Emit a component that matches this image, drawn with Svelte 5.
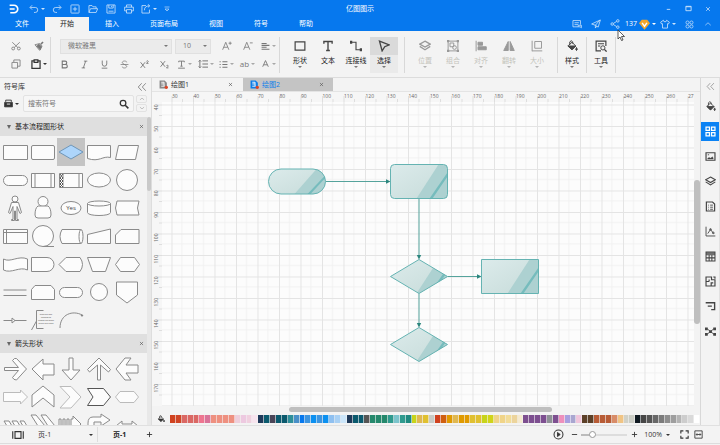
<script>
	// Icon markup, drawn on a 16x16 grid with currentColor strokes
	const icons = {
		logo: '<path d="M1 2h7a6 6 0 0 1 0 12H2M1 8h8" stroke-width="2.6"/>',
		undo: '<path d="M5 2 1.5 5.5 5 9M2 5.5h8a4 4 0 0 1 0 8H8"/>',
		redo: '<path d="m11 2 3.500 3.500L11 9M14 5.500H6a4 4 0 0 0 0 8h2"/>',
		add: '<rect x="1.500" y="1.500" width="13" height="13" rx="1"/><path d="M8 4.500v7M4.500 8h7"/>',
		folder: '<path d="M1.500 13.500v-11h5l1.500 2h5v3M1.500 13.500 4 7.500h11.500l-2.500 6z"/>',
		save: '<path d="M1.500 1.500h13v13h-13zM4.500 1.500v5h7v-5M9 3v2M4 11.500h8"/>',
		print: '<path d="M4 5V1.500h8V5M4 11H1V5h14v6h-3M4 9h8v5.500H4z"/>',
		exportTo: '<path d="M8 2.500H1.500v12h12V9M5.500 10c0-5 3-7 8-7M11 .5 14 3l-3 2.500"/>',
		more: '<path d="M3 4h10"/><path d="M4 8h8l-4 4z"/>',
		minimize: '<path d="M4 10h8" stroke-width="2"/>',
		maximize: '<path d="M2 3h12v10H2zM2 4h12" stroke-width="2"/>',
		close: '<path d="m3 3 10 10M13 3 3 13" stroke-width="2"/>',
		comment: '<path d="M13.500 9V2.500h-12v10H10M4 6h7M4 9h6M10 10h5v4l-2-1.500h-3z"/>',
		send: '<path d="M1 8 15 1.500 11.500 13 7 10zM7 10v4.500l2-3M7 10l7-8"/>',
		share: '<circle cx="3.500" cy="8" r="2"/><circle cx="12.500" cy="3" r="2"/><circle cx="12.500" cy="13" r="2"/><path d="m5.500 7 5-3M5.500 9l5 3"/>',
		gem: '<path d="M4 1h8l4 5-8 9.500L0 6z" fill="#f3a62c" stroke="none"/><path d="m4.500 5.500 3.500 5 3.500-5" stroke="#fff" stroke-width="2"/>',
		shirt: '<path d="M5.500 2 1 5l1.500 3L4 7.500v7h8v-7l1.500.5L15 5l-4.500-3a2.500 2.500 0 0 1-5 0z"/>',
		apps: '<circle cx="4.500" cy="4.500" r="2.800"/><circle cx="11.500" cy="4.500" r="2.800"/><circle cx="4.500" cy="11.500" r="2.800"/><circle cx="11.500" cy="11.500" r="2.800"/>',
		up: '<path d="m2.500 10.500 5.500-5 5.500 5"/>',
		down: '<path d="m2.500 5.500 5.500 5 5.500-5"/>',
		collapse: '<path d="M7.500 2 2 8l5.500 6M14 2 8.500 8l5.500 6"/>',
		cut: '<circle cx="3.500" cy="12" r="2.300"/><circle cx="12.500" cy="12" r="2.300"/><path d="M5 10.500 14 2M11 10.500 2 2"/>',
		brush: '<path d="M1.500 6 9 4l4 4-4 7z"/><path d="m4 8 6 6 2-5-4-4z" fill="currentColor"/><path d="m11 5 3.500-3.500" stroke-width="2.400"/>',
		copy: '<path d="M1.500 5.500h9v9h-9zM4.500 5V1.500h10v10h-4"/>',
		paste: '<path d="M4.500 3h-3v12h13V3h-3M5 1.500h6v4H5z" stroke-width="2"/>',
		bold: '<path d="M4 2h5a3 3 0 0 1 0 6H4zM4 8h6a3 3 0 0 1 0 6H4z" stroke-width="2"/>',
		italic: '<path d="M7 2h6M3 14h6M10 2 6 14" stroke-width="1.600"/>',
		underline: '<path d="M4 1v6a4 4 0 0 0 8 0V1M3 14.500h10" stroke-width="1.600"/>',
		strike: '<path d="M12 4c0-3-8-3-8 .5S12 8 12 11.500 4 15 4 12M1 8h14"/>',
		sup: '<path d="m1 4 8 10M9 4 1 14M11.500 2.500c1-2 3.500-1 3 .5l-3 3H15" stroke-width="1.600"/>',
		sub: '<path d="m1 2 8 10M9 2 1 12M11.500 10.500c1-2 3.500-1 3 .5l-3 3H15" stroke-width="1.600"/>',
		textFx: '<path d="M3 4V2h10v2M8 2v9M6 11h4M2 14.500h12" stroke-width="1.600"/>',
		spacing: '<path d="M3 2v12M1 4l2-2 2 2M1 12l2 2 2-2M7 3h9M7 8h9M7 13h9" stroke-width="1.600"/>',
		bullets: '<path d="M1 3h2M6 3h9M1 8h2M6 8h9M1 13h2M6 13h9" stroke-width="1.800"/>',
		fontColor: '<path d="M3 12 8 1l5 11M5 8.500h6" stroke-width="1.600"/>',
		grow: '<path d="M1 14 6 2l5 12M3 10h6M13 1v5M10.500 3.500h5"/>',
		shrink: '<path d="M1 14 6 2l5 12M3 10h6M11 3h4.500"/>',
		align: '<path d="M1 2.500h9M1 6h14M1 9.500h9M1 13h14" stroke-width="1.800"/>',
		shape: '<path d="M1.500 2.500h13v11h-13z" stroke-width="1.600"/>',
		text: '<path d="M2.500 5V2h11v3M8 2v12M5.500 14h5" stroke-width="1.800"/>',
		connector: '<path d="M1 3h7v10h6" stroke-width="1.500"/><path d="M0 1h3v4H0zM13 11h3v4h-3z" fill="currentColor" stroke="none"/>',
		pointer: '<path d="m2 1.500 13 5-6 2.500-3.500 5.500z" stroke-width="1.800"/>',
		layers: '<path d="m8 1.500 7 4-7 4-7-4zM1 8.500l7 4.500 7-4.500" stroke-width="1.600"/>',
		group: '<path d="M1.500 1.500h13v13h-13zM4 4h5v5H4z"/><circle cx="10" cy="10" r="2.500"/><path d="M0 0h3v3H0zM13 0h3v3h-3zM0 13h3v3H0zM13 13h3v3h-3z" fill="currentColor" stroke="none"/>',
		alignLeft: '<path d="M1.500 1v14"/><path d="M4 3h6v4H4zM4 9h11v4H4z" fill="currentColor"/>',
		flip: '<path d="M7 2v12H1z" fill="currentColor"/><path d="M9.500 2v12h5.500z" fill="currentColor"/>',
		sizing: '<path d="M1.500 1v14M1.500 14.500H15M5 2h9v9H5z"/>',
		bucket: '<path d="M3 7.500 8 3l5 5-5 5zM5 6.500V2.500q2-3 4 0V5"/><path d="M2.500 8h10.500L8 13z" fill="currentColor"/><path d="M14 10q2 3 0 4-2-1 0-4" fill="currentColor"/>',
		tools: '<path d="M14.500 8V1.500h-13v13H8M4 5h8M4 8h3" stroke-width="1.600"/><circle cx="10.500" cy="10.500" r="2.800"/><path d="m12.500 12.500 3 3" stroke-width="1.800"/>',
		grid: '<path d="M1.500 1.500h5v5h-5zM9.500 1.500h5v5h-5zM1.500 9.500h5v5h-5zM9.500 9.500h5v5h-5z" stroke-width="1.800"/>',
		image: '<path d="M1.500 2.500h13v11h-13z" stroke-width="1.700"/><path d="M4 11.500v-1l2-1 2 1 3-2 1 3z" fill="currentColor" stroke-width=".6"/><path d="M4 5.500h2"/>',
		doc: '<path d="M2 1.500h9l3 3v10H2z" stroke-width="1.700"/><path d="M4.500 6h1M7.500 6h4M4.500 9h1M7.500 9h4M4.500 12h1M7.500 12h4"/>',
		chart: '<path d="M1.500 1v13.500H15M4 11l4-6 3 4 2 2"/><circle cx="8" cy="5" r="1.200"/><circle cx="12" cy="10" r="1.200"/>',
		table: '<path d="M1.500 1.500h13v13h-13zM1.500 5.500h13M1.500 10h13M6 6v8M10 6v8" stroke-width="1.500"/><path d="M1.500 2h13v2h-13z" fill="currentColor" stroke="none"/>',
		plan: '<path d="M1.500 1.500h8v4h5v9h-13zM1.500 8H6M6 5v3M9 14v-4h3M12 1.500h2.500V4" stroke-width="1.700"/>',
		gantt: '<path d="M1 2.500h14M14 3v10M4 7.500h6M9 12.500h6" stroke-width="2"/>',
		network: '<path d="m3 4 10 8M13 4 3 12"/><path d="M0 2h4v4H0zM12 2h4v4h-4zM0 10h4v4H0zM12 10h4v4h-4zM6 6h4v4H6z" fill="currentColor" stroke="none"/>',
		search: '<circle cx="6.500" cy="6.500" r="4.500" stroke-width="2"/><path d="m10 10 5 5" stroke-width="2.500"/>',
		library: '<path d="M3 5V2h10v3" stroke-width="1.600"/><path d="M1 6h14v8H1z" fill="currentColor"/><path d="M5 9h6" stroke="#f3f3f3" stroke-width="1.600"/>',
		file: '<path d="M1 1h9l4 4v10H1z" fill="currentColor" stroke="none"/><path d="M4 4h5v3H4M4 11h6M9 7v4" stroke="#fff" stroke-width="1.600"/><circle cx="13" cy="13" r="3" fill="#dc4525" stroke="none"/>',
		pages: '<path d="M1 3v10M15 3v10M4 3.500h8v9H4z" stroke-width="1.500"/>',
		plus: '<path d="M8 2v12M2 8h12" stroke-width="2"/>',
		minus: '<path d="M2 8h12" stroke-width="2"/>',
		play: '<circle cx="8" cy="8" r="6.500" stroke-width="1.500"/><path d="m6.500 5 4 3-4 3z" fill="currentColor"/>',
		fullscreen: '<path d="M6 1.500H1.500V6M10 1.500h4.500V6M6 14.500H1.500V10M10 14.500h4.500V10" stroke-width="2"/>',
		fit: '<path d="M1.500 1.500h13v13h-13zM4 8h8M5.500 6 4 8l1.500 2M10.500 6 12 8l-1.500 2" stroke-width="1.500"/>',
	};

	const quick = [['undo', '撤销', true], ['redo', '重做'], ['add', '新建'], ['folder', '打开'], ['save', '保存'], ['print', '打印'], ['exportTo', '导出', true]];
	const menus = ['文件', '开始', '插入', '页面布局', '视图', '符号', '帮助'];

	const formats = [['bold', '加粗'], ['italic', '斜体'], ['underline', '下划线'], ['strike', '删除线'], ['sup', '上标'], ['sub', '下标']];
	const drawTools = [['shape', '形状', true], ['text', '文本'], ['connector', '连接线', true], ['pointer', '选择', true]];
	const arrange = [['layers', '位置'], ['group', '组合'], ['alignLeft', '对齐'], ['flip', '翻转'], ['sizing', '大小']];
	const side = [['bucket', '样式'], ['grid', '符号库'], ['image', '图片'], ['layers', '图层'], ['doc', '页面'], ['chart', '图表'], ['table', '表格'], ['plan', '平面图'], ['gantt', '甘特图'], ['network', '网络']];

	// Stencil shapes, 28x28 each
	const basicShapes = [
		'<path d="M2.500 7.500h24v14h-24z"/>',
		'<rect x="2.500" y="7.500" width="23" height="14" rx="1.500"/>',
		'<path d="m14 7 12 7-12 7-12-7z" fill="#add5fb" stroke="#6f96b8"/>',
		'<path d="M2.500 7.500h23v12c-8-2-11 5-23 1z"/>',
		'<path d="M5.500 7.500h20l-3 14h-20z"/>',
		'<rect x="2.500" y="9.500" width="24" height="10" rx="5"/>',
		'<path d="M2.500 7.500h23v14h-23zM6 7.500v14M22 7.500v14"/>',
		'<path d="M2.500 7.500h23v14h-23zM6 7.500v14M22 7.500v14"/><path d="m3 8 3 4-3 3 3 3-3 3M6 8l-3 4 3 3-3 3 3 3" stroke="#555"/>',
		'<ellipse cx="14" cy="14" rx="11.500" ry="7"/>',
		'<circle cx="14" cy="14" r="10.500"/>',
		'<circle cx="14" cy="5" r="3"/><path d="M10.500 8.500h7l3 10-1.500 1-3-7v13h1.500v1h-3V17h-1v9.500h-3v-1H12v-13l-3 7-1.500-1z"/>',
		'<circle cx="14" cy="7.500" r="5"/><path d="M9 12h10q3 2 3 9 0 3-3 3H9q-3 0-3-3 0-7 3-9z"/>',
		'<ellipse cx="14" cy="14" rx="10" ry="6.500"/>',
		'<path d="M2.500 9.500v9c0 4 23 4 23 0v-9"/><ellipse cx="14" cy="9.500" rx="11.500" ry="2.500"/>',
		'<path d="M4 7h22q-3 7 0 14H4q-3-7 0-14z"/>',
		'<path d="M2.500 7.500h24v14h-24zM5.500 7.500v14M2.500 10.500h24"/>',
		'<circle cx="14" cy="14" r="10.500"/><path d="M14 24.500h11"/>',
		'<path d="M5 7.500h19q2.500 7 0 14H5q-4-7 0-14z"/><ellipse cx="24" cy="14.500" rx="2" ry="7"/>',
		'<path d="M2.500 12.500 25.500 7v14.500h-23z"/>',
		'<path d="M8 7.500h18v14H2.500V13z"/>',
		'<path d="M2.500 9c7 4 15-4 24 0v11c-8-4-16 4-24 0z"/>',
		'<path d="M2.500 7.500H18a7 7 0 0 1 0 14H2.500z"/>',
		'<path d="M9 7.500h14q5 7 0 14H9l-7-7z"/>',
		'<path d="M2.500 7.500h23l-5 14h-13z"/>',
		'<path d="M7.500 7.500h14l5 7-5 7h-14l-5-7z"/>',
		'<path d="M2.500 12h23M2.500 17.500h23"/>',
		'<path d="M6 7.500h16l3.500 4v10h-23v-10z"/>',
		'<rect x="2.500" y="9.500" width="23" height="10" rx="5"/>',
		'<circle cx="14" cy="14" r="8.500"/>',
		'<path d="M3.500 4h21v13L14 25 3.500 17z"/>',
		'<path d="M2.500 14.500h23"/><path d="m11 12 3 2.500-3 2.500z"/>',
		'<path d="M14.500 4.500h-7v18h7M2.500 24l5-9" fill="none"/>',
		'<path d="M3 22C3 8 16 4 25 9" fill="none"/><circle cx="25" cy="9.500" r=".7" fill="#333"/>',
	];
	const arrowShapes = [
		'<path d="M3.500 12.500h14l-6-7q2-3 4-2l10 10.500-10 11q-3 0-4-2.500l6-7h-14z"/>',
		'<path d="M3 14 14 4v5h11v11H14v5z"/>',
		'<path d="M12 3h4v12h7l-9 10-9-10h7z"/>',
		'<path d="M12.500 25V10l-8 7-2-2.500L14 3l11.500 11.500-2 2.500-8-7v15z"/>',
		'<path d="M3 14 12 3h6l-5 7h12v8H13l5 7h-6z"/>',
		'<path d="M2.500 9.500h17V7l7 7-7 7v-2.500h-17z" stroke="#bbb"/>',
		'<path d="M3 12 14 3l11 9v12l-11-9-11 9z"/>',
		'<path d="M3 3.500h11l10 10.500-10 11H3l10-11z" stroke="#bbb"/>',
		'<path d="M2.500 5.500h16l7 8.500-7 8.500h-16L8 14z" stroke="#555"/>',
		'<path d="M7 8.500h14l4.500 5.500-4.500 5.500H7L2.500 14z" stroke="#bbb"/>',
		'<path d="M3 10h5l3 5v8H3l3-8zM11 10h5l3 5v8h-5v-8zM19 10h4l3 5v8h-4v-8z"/>',
		'<path d="M2 4h5l9 11-8 10H2l7-10zM12 4h5l9 11-8 10h-5l6-10z"/>',
		'<path d="M2 8h2v9H2zM6 8h2v9H6zM10 8h2v9h-2zM14 8h2V5l8 8-8 8v-4h-2z"/>',
		'<path d="M3 12q0-6 5-6h8V3l9 6-9 6v-4H9v10H3z"/>',
		'<path d="m3 15 6-5v3h10v-3l6 5-6 5v-3H9v3z"/>',
	];

	const swatches = (
		'd0421f cf4526 da6864 da6864 da6864 ee7590 d97399 ee9080 ee9080 ee9080 ee9080 eecfdc edc9e0 f0d0df f7e4ee ' +
		'1f3a5a 0b5a6e 4a4558 0b5a6e 0b5a6e 2e8f9a 4a90c8 0678ee 3d95e0 0c90f0 3d95e0 0c90f0 8fc0f0 a8d0f4 cce6fa ' +
		'1f3a5a 0b5a6e 0b5a6e 555555 24886c 24886c 24886c 2f9a8e 7cc4cc 2f9a8e 1f8a80 c8d41a e0b850 e0c030 c9cbc6 ' +
		'd0421f d06010 e09a00 e0b850 e09a00 e09a00 e0c030 e0c030 c8d41a d0d41a f0d488 f0d488 f2dc98 ecd49c f5ead0 ' +
		'7d4f90 7d4f90 7d4f90 7d4f90 8e9196 7d4f90 ee90bc a8a0e0 a9a6d0 f0c6dc 5c4028 5c4028 b85c36 b85c36 b85c36 ' +
		'd88c68 f0c484 d0d1c8 cccec6 101a22 464646 555555 686868 7b7b7b 8e8e8e 9e9e9e b4b4b4 cdcdcd dadada ffffff'
	).split(' ');

	const cols = Array.from({ length: 25 }, (_, i) => ({ label: i < 24 ? 30 + i * 10 : 27, at: 19.5 + i * 21.5 }));
	const rows = Array.from({ length: 14 }, (_, i) => ({ label: 40 + i * 10, at: 12.5 + i * 21.5 }));

	const nodes = [
		{ x: 116.5, y: 77, h: 25, d: 'M12.5 0h32a12.500 12.500 0 0 1 0 25h-32a12.500 12.500 0 0 1 0-25z' },
		{ x: 238.5, y: 72.5, h: 34, d: 'M4 0h49a4 4 0 0 1 4 4v26a4 4 0 0 1-4 4H4a4 4 0 0 1-4-4V4a4 4 0 0 1 4-4z' },
		{ x: 238.5, y: 167.5, h: 34, d: 'M28.500 0 57 17 28.500 34 0 17z' },
		{ x: 329.5, y: 167.5, h: 34, d: 'M0 0h57v34H0z' },
		{ x: 238.5, y: 235.5, h: 34, d: 'M28.500 0 57 17 28.500 34 0 17z' },
	];
	const links = ['M173.500 89.500H236', 'M267 106.500V165', 'M295.500 184.500H327', 'M267 201.500V233'];

	let menu = $state('开始');
	let tool = $state('选择');
	let panel = $state('符号库');
	let doc = $state('绘图2');
	let picked = $state(2);
	let query = $state('');
	let zoom = $state(100);
</script>

{#snippet icon(name, size = 10)}
	<svg class="icon" width={size} height={size} viewBox="0 0 16 16" aria-hidden="true">{@html icons[name]}</svg>
{/snippet}

{#snippet iconBtn(name, label, caret = false, size = 10)}
	<button class="icon-btn" class:has-caret={caret} aria-label={label}>
		{@render icon(name, size)}
		{#if caret}<span class="caret"></span>{/if}
	</button>
{/snippet}

{#snippet bigBtn(name, label, caret, disabled)}
	<button class="big" class:active={tool === label} {disabled} onclick={() => (tool = label)}>
		<span class="big-icon">{@render icon(name, 12)}</span>
		<span class="big-label">{label}</span>
		{#if caret}<span class="caret"></span>{/if}
	</button>
{/snippet}

<div class="app">
	<header>
		<div class="titlebar">
			<div class="quick">
				<span class="logo">{@render icon('logo')}</span>
				{#each quick as [name, label, caret]}
					{@render iconBtn(name, label, caret)}
				{/each}
				<button class="icon-btn narrow" aria-label="更多">{@render icon('more', 8)}</button>
			</div>
			<h1>亿图图示</h1>
			<div class="window-btns">
				{@render iconBtn('minimize', '最小化', false, 7)}
				{@render iconBtn('maximize', '最大化', false, 7)}
				{@render iconBtn('close', '关闭', false, 6)}
			</div>
		</div>
		<div class="menubar">
			<nav>
				{#each menus as m}
					<button class="menu" class:active={menu === m} onclick={() => (menu = m)}>{m}</button>
				{/each}
			</nav>
			<div class="account">
				{@render iconBtn('comment', '评论')}
				{@render iconBtn('send', '发送')}
				{@render iconBtn('share', '分享')}
				<button class="points">137 {@render icon('gem', 11)}<span class="caret"></span></button>
				{@render iconBtn('shirt', '主题', true)}
				{@render iconBtn('apps', '应用', false, 9)}
				{@render iconBtn('up', '收起功能区', false, 8)}
			</div>
		</div>
	</header>

	<div class="ribbon">
		<div class="group clipboard">
			{@render iconBtn('cut', '剪切')}
			{@render iconBtn('brush', '格式刷')}
			{@render iconBtn('copy', '复制')}
			<button class="icon-btn has-caret dark" aria-label="粘贴">{@render icon('paste')}<span class="caret"></span></button>
		</div>
		<div class="group font">
			<div class="row">
				<span class="select family">
					<select aria-label="字体"><option>微软雅黑</option><option>宋体</option></select>
					<span class="caret"></span>
				</span>
				<span class="select size">
					<select aria-label="字号"><option>10</option><option>12</option></select>
					<span class="caret"></span>
				</span>
				<span class="wide">
					{@render iconBtn('grow', '增大字号')}
					{@render iconBtn('shrink', '减小字号')}
					{@render iconBtn('align', '对齐方式', true, 9)}
				</span>
			</div>
			<div class="row">
				{#each formats as [name, label]}{@render iconBtn(name, label, false, 9)}{/each}
				<span class="wide">
					{@render iconBtn('textFx', '文字效果', true, 9)}
					{@render iconBtn('spacing', '行距', true)}
					{@render iconBtn('bullets', '项目符号', true, 9)}
					<button class="icon-btn has-caret ab">ab<span class="caret"></span></button>
					{@render iconBtn('fontColor', '字体颜色', true, 9)}
				</span>
			</div>
		</div>
		<div class="group">
			{#each drawTools as [name, label, caret]}{@render bigBtn(name, label, caret, false)}{/each}
		</div>
		<div class="group">
			{#each arrange as [name, label]}{@render bigBtn(name, label, true, true)}{/each}
		</div>
		<div class="group single">{@render bigBtn('bucket', '样式', true, false)}</div>
		<div class="group single">{@render bigBtn('tools', '工具', true, false)}</div>
	</div>

	<main>
		<aside class="library">
			<div class="lib-head">
				<h2>符号库</h2>
				{@render iconBtn('collapse', '折叠')}
			</div>
			<div class="lib-search">
				<button class="icon-btn has-caret" aria-label="打开库">{@render icon('library', 9)}<span class="caret"></span></button>
				<label class="search">
					<input type="text" placeholder="搜索符号" aria-label="搜索符号" bind:value={query} />
					{@render icon('search')}
				</label>
				<div class="steps">
					<button aria-label="上一个">{@render icon('up', 6)}</button>
					<button aria-label="下一个">{@render icon('down', 6)}</button>
				</div>
			</div>
			<div class="lib-body">
				<div class="lib-list">
					<div class="lib-section">
						<span class="fold"></span>
						<h3>基本流程图形状</h3>
						{@render iconBtn('close', '关闭', false, 5)}
					</div>
					<div class="shapes">
						{#each basicShapes as s, i}
							<button class:picked={picked === i} aria-label="形状 {i + 1}" onclick={() => (picked = i)}>
								<svg viewBox="0 0 28 28">
									{@html s}
									{#if i === 12}<text class="yes" x="14" y="16">Yes</text>{/if}
									{#if i === 31}
										<text class="note" x="17" y="9">Drag the side</text>
										<text class="note" x="17" y="12">handles to</text>
										<text class="note" x="17" y="15">change the width</text>
										<text class="note" x="17" y="18">of the text block</text>
									{/if}
								</svg>
							</button>
						{/each}
					</div>
					<div class="lib-section">
						<span class="fold"></span>
						<h3>箭头形状</h3>
						{@render iconBtn('close', '关闭', false, 5)}
					</div>
					<div class="shapes">
						{#each arrowShapes as s, i}
							<button aria-label="箭头 {i + 1}"><svg viewBox="0 0 28 28">{@html s}</svg></button>
						{/each}
					</div>
				</div>
				<div class="lib-scroll"><span></span></div>
			</div>
		</aside>

		<section class="editor">
			<div class="doc-tabs">
				{#each ['绘图1', '绘图2'] as d}
					<div class="doc-tab" class:active={doc === d}>
						<button class="doc-name" onclick={() => (doc = d)}>{@render icon('file', 9)}{d}</button>
						{@render iconBtn('close', '关闭', false, 5)}
					</div>
				{/each}
			</div>
			<div class="viewport">
				<svg class="canvas">
					<defs>
						<pattern id="grid" x="19.500" y="12.500" width="21.500" height="21.500" patternUnits="userSpaceOnUse">
							<path d="M10.500 0v21.500M0 10.500h21.500" stroke="#f1f1f1" />
							<path d="M.5 0v21.500M0 .5h21.500" stroke="#e4e4e4" />
						</pattern>
						<linearGradient id="glass" x2="1" y2="1">
							<stop offset="0" stop-color="#dcebeb" />
							<stop offset="1" stop-color="#c6dbd9" />
						</linearGradient>
						<marker id="arrow" markerWidth="6" markerHeight="6" refX="2" refY="2.500" orient="auto" markerUnits="userSpaceOnUse">
							<path d="M0 .3 4.500 2.500 0 4.700z" fill="#2b857d" />
						</marker>
						{#each nodes as n, i}
							<clipPath id="clip{i}"><path d={n.d} /></clipPath>
						{/each}
					</defs>
					<rect width="100%" height="100%" fill="#f6f6f6" />
					<rect x="10" y="10" width="100%" height="100%" fill="#fcfcfc" />
					<rect x="10" y="10" width="100%" height="100%" fill="url(#grid)" />
					<g class="ruler">
						{#each cols as c}
							<path d="M{c.at + 0.5} 4v6M{c.at + 11} 7v3" />
							<text x={c.at + 0.5} y="6">{c.label}</text>
						{/each}
						{#each rows as r}
							<path d="M4 {r.at + 0.5}h6M7 {r.at + 11}h3" />
							<text class="v" transform="translate(6 {r.at}) rotate(-90)">{r.label}</text>
						{/each}
					</g>
					{#each links as d}
						<path class="link" {d} marker-end="url(#arrow)" />
					{/each}
					{#each nodes as n, i}
						<g transform="translate({n.x} {n.y})">
							<path d={n.d} fill="url(#glass)" />
							<g clip-path="url(#clip{i})">
								<g transform="scale(1 {n.h / 34})">
									<path d="M26 34 48 0h9v34z" fill="#add1d1" />
									<path d="M39 34 57 8v4L42 34z" fill="#76bcbd" />
								</g>
							</g>
							<path class="outline" d={n.d} />
						</g>
					{/each}
				</svg>
				<div class="vscroll"><span></span></div>
			</div>
			<div class="hscroll"><span></span></div>
			<div class="palette">
				{@render iconBtn('bucket', '填充', false, 8)}
				<div class="swatches">
					{#each swatches as c}
						<button aria-label="#{c}" style="background:#{c}"></button>
					{/each}
				</div>
			</div>
		</section>

		<aside class="sidebar">
			<button class="collapse" aria-label="折叠">{@render icon('collapse', 9)}</button>
			{#each side as [name, label]}
				<button class:active={panel === label} aria-label={label} onclick={() => (panel = label)}>{@render icon(name, 11)}</button>
			{/each}
		</aside>
	</main>

	<footer>
		<div class="page-pick">
			{@render icon('pages', 12)}
			<span class="select">
				<select aria-label="页面"><option>页-1</option></select>
				<span class="caret"></span>
			</span>
		</div>
		<button class="page">页-1</button>
		{@render iconBtn('plus', '新建页', false, 7)}
		<div class="zoom">
			{@render iconBtn('play', '演示', false, 11)}
			<button class="step" aria-label="缩小" onclick={() => (zoom -= 10)}>{@render icon('minus', 7)}</button>
			<input type="range" min="25" max="400" aria-label="缩放" bind:value={zoom} />
			<button class="step" aria-label="放大" onclick={() => (zoom += 10)}>{@render icon('plus', 7)}</button>
			<button class="percent">{zoom}%<span class="caret"></span></button>
			<button class="step" aria-label="全屏">{@render icon('fullscreen', 9)}</button>
			<button class="step" aria-label="适应宽度">{@render icon('fit', 9)}</button>
		</div>
	</footer>

	<svg class="cursor" width="9" height="12" viewBox="0 0 9 12" aria-hidden="true">
		<path d="M1 1v9l2-2 1.500 3.500 1.500-.5L4.500 7.500h3z" fill="#fff" stroke="#333" stroke-width=".8" />
	</svg>
</div>

<style>
	:global(body) { margin: 0; background: #f3f3f3; }

	.app {
		position: relative;
		display: flex;
		flex-direction: column;
		height: 100vh;
		overflow: hidden;
		background: #f3f3f3;
		color: #333;
		font: 7px/10px "Open Sans", "Noto Sans CJK SC", sans-serif;
	}

	button, input, select {
		font: inherit;
		color: inherit;
		background: none;
		border: 0;
		padding: 0;
		margin: 0;
	}
	button { display: flex; align-items: center; justify-content: center; }
	h1, h2, h3 { margin: 0; font: inherit; }

	.icon {
		display: block;
		flex-shrink: 0;
		fill: none;
		stroke: currentColor;
		stroke-width: 1.3;
	}
	.icon-btn { width: 18px; flex-shrink: 0; }
	.icon-btn.has-caret { width: 22px; gap: 2px; }
	.icon-btn.narrow { width: 14px; }

	.caret {
		border: 2px solid transparent;
		border-top-color: currentColor;
		border-bottom: 0;
		flex-shrink: 0;
	}

	/* Title and menu */
	header { background: #0678ee; color: #fff; }
	.titlebar {
		display: grid;
		grid-template-columns: 1fr auto 1fr;
		align-items: center;
		height: 17px;
	}
	.titlebar .icon-btn { opacity: 0.8; }
	.quick { display: flex; align-items: center; }
	.logo { padding: 0 7px 0 9px; }
	.window-btns { display: flex; justify-content: flex-end; gap: 2px; padding-right: 3px; }
	.menubar { display: flex; justify-content: space-between; height: 14px; }
	nav { display: flex; gap: 1px; }
	.menu { padding: 0 15px; }
	.menu.active { background: #f3f3f3; color: #222; }
	.account { display: flex; align-items: center; gap: 1px; padding-right: 3px; }
	.account .icon-btn { opacity: 0.8; }
	.points { gap: 2px; }

	/* Ribbon */
	.ribbon {
		display: flex;
		height: 36px;
		padding: 6px 0 4px;
		border-bottom: 1px solid #dcdcdc;
		color: #777;
	}
	.group { display: flex; padding: 0 6px; border-right: 1px solid #d8d8d8; }
	.group.single { padding: 0; }
	.clipboard {
		display: grid;
		grid-template-columns: 24px 22px;
		padding: 0 0 0 4px;
	}
	.clipboard .icon-btn { width: auto; }
	.dark { color: #333; }
	.font { flex-direction: column; justify-content: space-between; padding: 0 0 0 3px; }
	.row { display: flex; height: 18px; align-items: center; }
	.row .icon-btn { width: 20px; }
	.wide { display: flex; }
	.wide .icon-btn { width: 21px; }
	.wide .caret { opacity: 0.6; }
	.ab { font-size: 8px; }

	.select { position: relative; display: flex; align-items: center; }
	.select select { appearance: none; width: 100%; height: 15px; outline: 0; }
	.select .caret { position: absolute; right: 4px; pointer-events: none; }
	.family select, .size select { border: 1px solid #e0e0e0; background: #ebebeb; padding: 0 7px; }
	.family { width: 112px; margin: 0 3px 0 6px; }
	.size { width: 36px; margin-right: 5px; }

	.big { flex-direction: column; justify-content: flex-start; width: 28px; color: #444; }
	.big-icon { display: flex; align-items: center; justify-content: center; width: 100%; height: 18px; flex-shrink: 0; }
	.big-label { color: #222; line-height: 11px; white-space: nowrap; }
	.big .caret { opacity: 0.7; }
	.big.active { background: #eaeaea; }
	.big.active .big-icon { background: #dadada; }
	.big:disabled { color: #999; }
	.big:disabled .big-label { color: #c4c4bc; }

	main { display: flex; flex: 1; min-height: 0; }

	/* Symbol library */
	.library { display: flex; flex-direction: column; width: 151px; flex-shrink: 0; border-right: 1px solid #ddd; }
	.lib-head { display: flex; justify-content: space-between; align-items: center; height: 17px; padding-left: 4px; color: #777; }
	.lib-head h2 { color: #333; }
	.lib-search { display: flex; align-items: center; gap: 2px; height: 17px; padding: 0 4px 5px 1px; }
	.lib-search .icon-btn { width: 20px; }
	.search {
		display: flex;
		align-items: center;
		flex: 1;
		min-width: 0;
		height: 15px;
		padding: 0 4px;
		border: 1px solid #e2e2e2;
		border-radius: 2px;
		background: #f6f6f6;
	}
	.search input { flex: 1; min-width: 0; outline: 0; }
	.search input::placeholder { color: #777; }
	.steps { display: flex; flex-direction: column; gap: 1px; color: #888; }
	.steps button { width: 11px; height: 8px; border: 1px solid #e2e2e2; border-radius: 2px; box-sizing: border-box; }
	.lib-body { display: flex; flex: 1; min-height: 0; }
	.lib-list { flex: 1; overflow: hidden; }
	.lib-section { display: flex; align-items: center; height: 19px; background: #dfdfdf; padding-left: 7px; color: #555; }
	.lib-section h3 { flex: 1; padding-left: 4px; color: #222; }
	.lib-section .icon-btn { width: 12px; }
	.fold { border: 2px solid transparent; border-top: 4px solid #666; border-bottom: 0; }
	.shapes { display: grid; grid-template-columns: repeat(5, 28px); padding: 2px 0 0 1px; }
	.shapes button { height: 28px; }
	.shapes button.picked { background: #c4c4c4; }
	.shapes svg { width: 28px; height: 28px; fill: #fcfcfc; stroke: #8a8a8a; stroke-width: 1; }
	.shapes text { stroke: none; fill: #444; text-anchor: middle; }
	.yes { font-size: 6px; }
	.note { font-size: 2px; }
	.lib-scroll { width: 4px; background: #e8e8e8; }
	.lib-scroll span { display: block; height: 24%; background: #c9c9c9; border-radius: 2px; }

	/* Drawing area */
	.editor { display: flex; flex-direction: column; flex: 1; min-width: 0; }
	.doc-tabs { display: flex; height: 14px; gap: 1px; border-bottom: 1px solid #e4e4e4; box-sizing: border-box; }
	.doc-tab { display: flex; justify-content: space-between; width: 90px; padding-left: 7px; color: #555; box-sizing: border-box; }
	.doc-tab .icon-btn { width: 24px; }
	.doc-name { gap: 3px; color: #333; }
	.doc-name .icon { color: #888; }
	.doc-tab.active { background: #c4c4c4; }
	.doc-tab.active .doc-name, .doc-tab.active .doc-name .icon { color: #0b7eea; }
	.viewport { display: flex; flex: 1; min-height: 0; }
	.canvas { flex: 1; min-width: 0; height: 100%; }
	.ruler { stroke: #dedede; }
	.ruler text { stroke: none; fill: #666; font-size: 5px; }
	.ruler .v { text-anchor: end; }
	.link { fill: none; stroke: #55a39c; }
	.outline { fill: none; stroke: #65b3b2; }
	.vscroll { width: 6px; }
	.vscroll span { display: block; height: 46%; margin-top: 88px; background: #bfbfbf; border-radius: 3px; }
	.hscroll { height: 8px; flex-shrink: 0; }
	.hscroll span { display: block; width: 48%; height: 5px; margin: 1px 0 0 25%; background: #bfbfbf; border-radius: 3px; }
	.palette { display: flex; align-items: center; height: 10px; padding-bottom: 1px; flex-shrink: 0; }
	.swatches { display: flex; flex: 1; height: 8px; }
	.swatches button { flex: 1; border-right: 1px solid #f3f3f399; }

	.sidebar { display: flex; flex-direction: column; gap: 6px; width: 18px; border-left: 1px solid #d8d8d8; border-right: 1px solid #e2e2e2; color: #444; }
	.sidebar button { height: 19px; flex-shrink: 0; }
	.sidebar .collapse { height: 16px; margin-bottom: -3px; color: #888; }
	.sidebar .active { background: #0b82f4; color: #fff; }

	/* Status bar */
	footer {
		display: flex;
		align-items: center;
		height: 17px;
		margin-bottom: 1px;
		border-top: 1px solid #e0e0e0;
		border-bottom: 1px solid #ddd;
	}
	.page-pick { display: flex; align-items: center; gap: 14px; padding-left: 12px; border-right: 1px solid #ddd; }
	.page-pick .select { width: 59px; }
	.page { padding: 0 14px 0 15px; font-weight: 700; color: #222; }
	.zoom { display: flex; align-items: center; margin-left: auto; padding-right: 15px; }
	.step { width: 14px; }
	.percent { gap: 4px; padding: 0 7px 0 3px; }
	input[type="range"] { appearance: none; width: 46px; height: 9px; }
	input[type="range"]::-webkit-slider-runnable-track { height: 2px; background: linear-gradient(90deg, #bbb 25%, #ddd 25%); }
	input[type="range"]::-webkit-slider-thumb {
		appearance: none;
		width: 7px;
		height: 7px;
		margin-top: -3px;
		border: 1px solid #999;
		border-radius: 50%;
		background: #fff;
	}

	.cursor { position: absolute; left: 617px; top: 29px; }
</style>
